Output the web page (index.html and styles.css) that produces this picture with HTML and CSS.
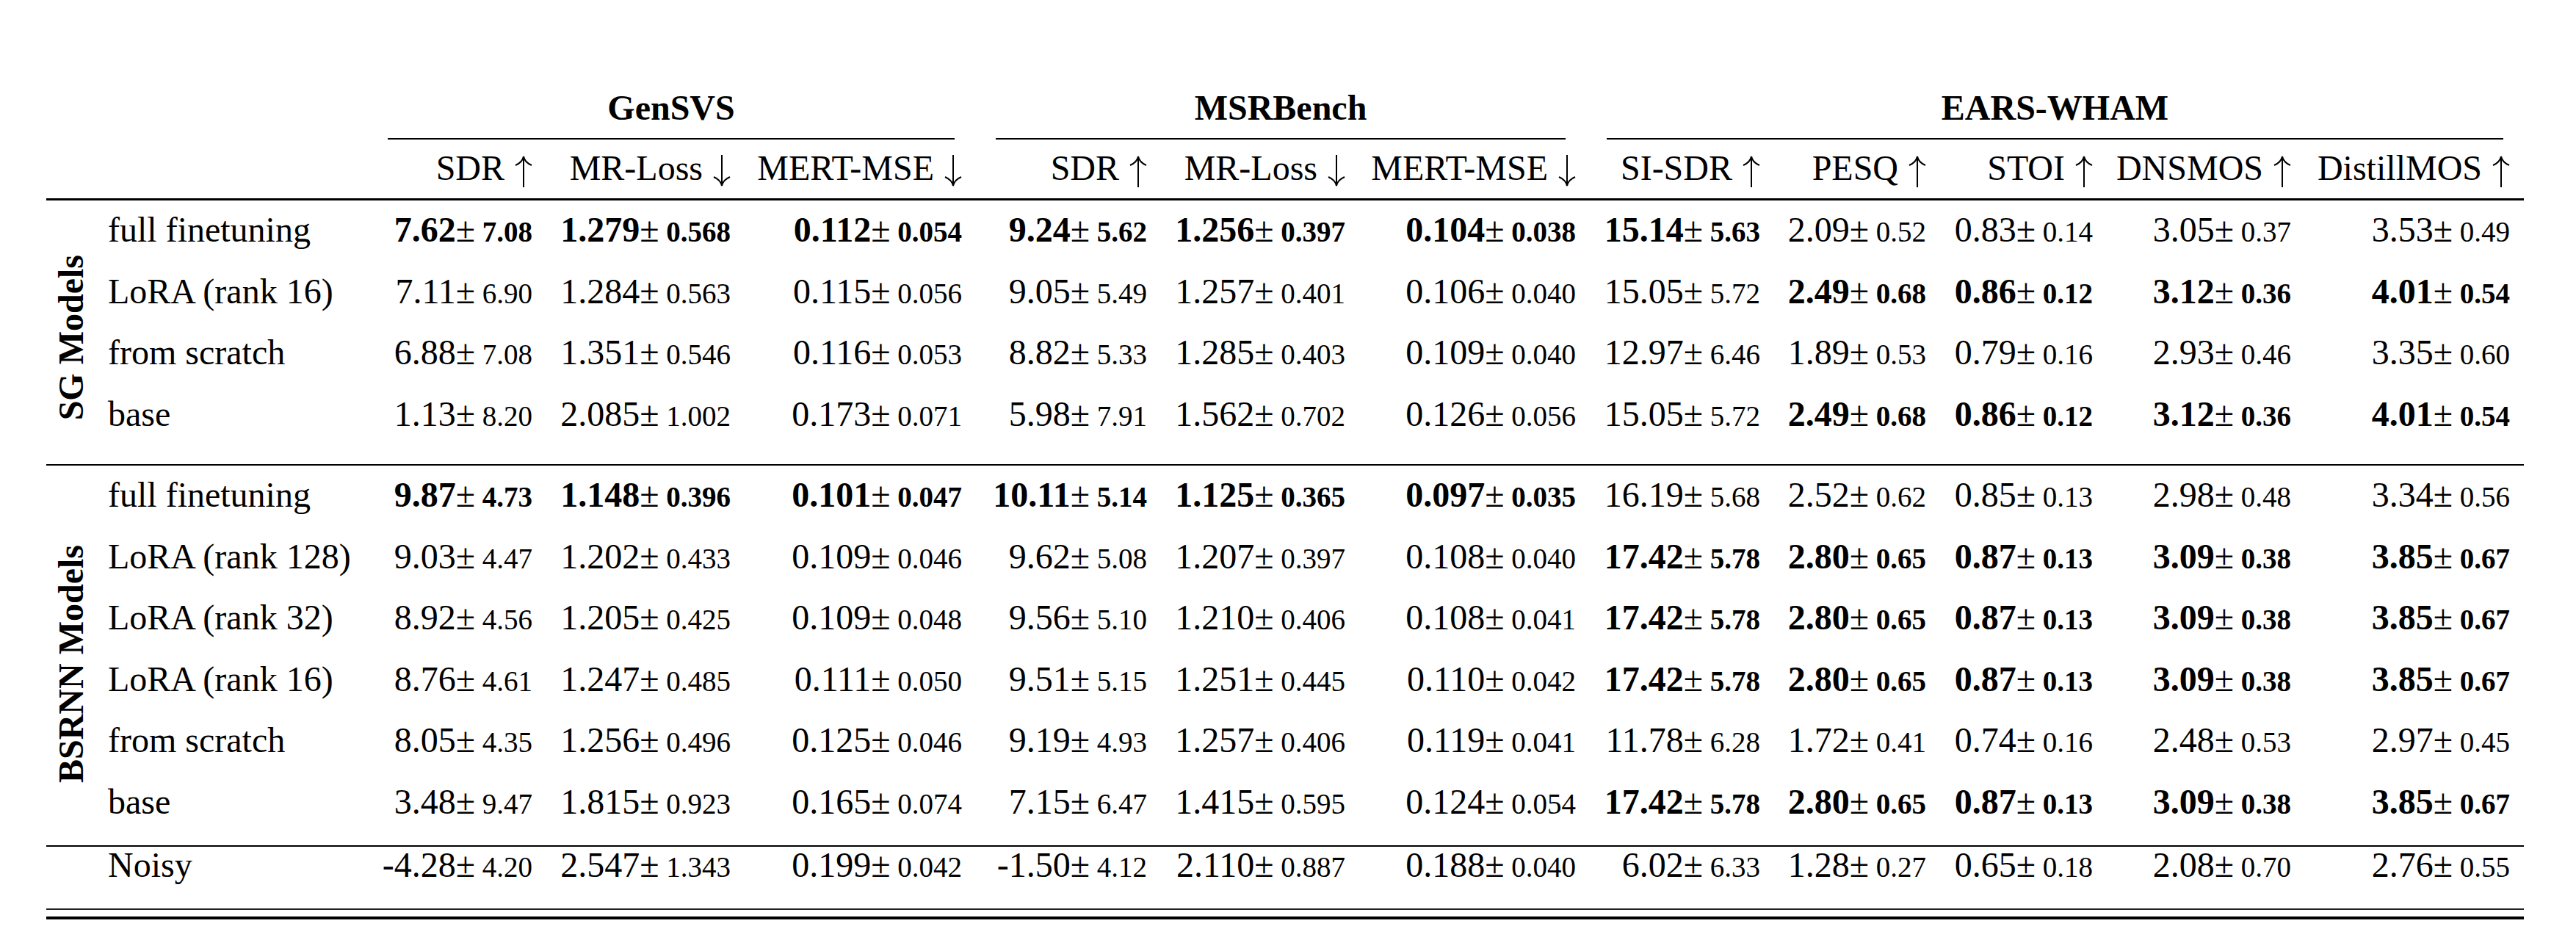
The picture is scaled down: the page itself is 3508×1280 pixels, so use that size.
FILE: index.html
```html
<!DOCTYPE html>
<html lang="en">
<head>
<meta charset="utf-8">
<title>Results table</title>
<link rel="stylesheet" href="styles.css">
</head>
<body>
<div class="tbl">
  <div class="grp-row">
    <div class="blank"></div>
    <div class="grp g1">GenSVS</div>
    <div class="grp g2">MSRBench</div>
    <div class="grp g3">EARS-WHAM</div>
  </div>
  <div class="hdr-row">
    <div class="blank"></div>
    <div class="h">SDR <svg class="ar" viewBox="0 0 28 44" aria-label="higher is better"><path d="M14 44V2M14 2Q12.5 10 3 14M14 2Q15.5 10 25 14"/></svg></div>
    <div class="h">MR-Loss <svg class="ar" viewBox="0 0 28 44" aria-label="lower is better"><path d="M14 0V42M14 42Q12.5 34 3 30M14 42Q15.5 34 25 30"/></svg></div>
    <div class="h">MERT-MSE <svg class="ar" viewBox="0 0 28 44" aria-label="lower is better"><path d="M14 0V42M14 42Q12.5 34 3 30M14 42Q15.5 34 25 30"/></svg></div>
    <div class="h">SDR <svg class="ar" viewBox="0 0 28 44" aria-label="higher is better"><path d="M14 44V2M14 2Q12.5 10 3 14M14 2Q15.5 10 25 14"/></svg></div>
    <div class="h">MR-Loss <svg class="ar" viewBox="0 0 28 44" aria-label="lower is better"><path d="M14 0V42M14 42Q12.5 34 3 30M14 42Q15.5 34 25 30"/></svg></div>
    <div class="h">MERT-MSE <svg class="ar" viewBox="0 0 28 44" aria-label="lower is better"><path d="M14 0V42M14 42Q12.5 34 3 30M14 42Q15.5 34 25 30"/></svg></div>
    <div class="h">SI-SDR <svg class="ar" viewBox="0 0 28 44" aria-label="higher is better"><path d="M14 44V2M14 2Q12.5 10 3 14M14 2Q15.5 10 25 14"/></svg></div>
    <div class="h">PESQ <svg class="ar" viewBox="0 0 28 44" aria-label="higher is better"><path d="M14 44V2M14 2Q12.5 10 3 14M14 2Q15.5 10 25 14"/></svg></div>
    <div class="h">STOI <svg class="ar" viewBox="0 0 28 44" aria-label="higher is better"><path d="M14 44V2M14 2Q12.5 10 3 14M14 2Q15.5 10 25 14"/></svg></div>
    <div class="h">DNSMOS <svg class="ar" viewBox="0 0 28 44" aria-label="higher is better"><path d="M14 44V2M14 2Q12.5 10 3 14M14 2Q15.5 10 25 14"/></svg></div>
    <div class="h">DistillMOS <svg class="ar" viewBox="0 0 28 44" aria-label="higher is better"><path d="M14 44V2M14 2Q12.5 10 3 14M14 2Q15.5 10 25 14"/></svg></div>
  </div>

  <section class="sec">
    <div class="side"><span class="vlabel">SG Models</span></div>
    <div class="rows">
      <div class="row">
        <div class="name">full finetuning</div>
        <div class="v"><b>7.62</b>±<b class="sd"> 7.08</b></div>
        <div class="v"><b>1.279</b>±<b class="sd"> 0.568</b></div>
        <div class="v"><b>0.112</b>±<b class="sd"> 0.054</b></div>
        <div class="v"><b>9.24</b>±<b class="sd"> 5.62</b></div>
        <div class="v"><b>1.256</b>±<b class="sd"> 0.397</b></div>
        <div class="v"><b>0.104</b>±<b class="sd"> 0.038</b></div>
        <div class="v"><b>15.14</b>±<b class="sd"> 5.63</b></div>
        <div class="v">2.09±<span class="sd"> 0.52</span></div>
        <div class="v">0.83±<span class="sd"> 0.14</span></div>
        <div class="v">3.05±<span class="sd"> 0.37</span></div>
        <div class="v">3.53±<span class="sd"> 0.49</span></div>
      </div>
      <div class="row">
        <div class="name">LoRA (rank 16)</div>
        <div class="v">7.11±<span class="sd"> 6.90</span></div>
        <div class="v">1.284±<span class="sd"> 0.563</span></div>
        <div class="v">0.115±<span class="sd"> 0.056</span></div>
        <div class="v">9.05±<span class="sd"> 5.49</span></div>
        <div class="v">1.257±<span class="sd"> 0.401</span></div>
        <div class="v">0.106±<span class="sd"> 0.040</span></div>
        <div class="v">15.05±<span class="sd"> 5.72</span></div>
        <div class="v"><b>2.49</b>±<b class="sd"> 0.68</b></div>
        <div class="v"><b>0.86</b>±<b class="sd"> 0.12</b></div>
        <div class="v"><b>3.12</b>±<b class="sd"> 0.36</b></div>
        <div class="v"><b>4.01</b>±<b class="sd"> 0.54</b></div>
      </div>
      <div class="row">
        <div class="name">from scratch</div>
        <div class="v">6.88±<span class="sd"> 7.08</span></div>
        <div class="v">1.351±<span class="sd"> 0.546</span></div>
        <div class="v">0.116±<span class="sd"> 0.053</span></div>
        <div class="v">8.82±<span class="sd"> 5.33</span></div>
        <div class="v">1.285±<span class="sd"> 0.403</span></div>
        <div class="v">0.109±<span class="sd"> 0.040</span></div>
        <div class="v">12.97±<span class="sd"> 6.46</span></div>
        <div class="v">1.89±<span class="sd"> 0.53</span></div>
        <div class="v">0.79±<span class="sd"> 0.16</span></div>
        <div class="v">2.93±<span class="sd"> 0.46</span></div>
        <div class="v">3.35±<span class="sd"> 0.60</span></div>
      </div>
      <div class="row">
        <div class="name">base</div>
        <div class="v">1.13±<span class="sd"> 8.20</span></div>
        <div class="v">2.085±<span class="sd"> 1.002</span></div>
        <div class="v">0.173±<span class="sd"> 0.071</span></div>
        <div class="v">5.98±<span class="sd"> 7.91</span></div>
        <div class="v">1.562±<span class="sd"> 0.702</span></div>
        <div class="v">0.126±<span class="sd"> 0.056</span></div>
        <div class="v">15.05±<span class="sd"> 5.72</span></div>
        <div class="v"><b>2.49</b>±<b class="sd"> 0.68</b></div>
        <div class="v"><b>0.86</b>±<b class="sd"> 0.12</b></div>
        <div class="v"><b>3.12</b>±<b class="sd"> 0.36</b></div>
        <div class="v"><b>4.01</b>±<b class="sd"> 0.54</b></div>
      </div>
    </div>
  </section>

  <section class="sec sec-b">
    <div class="side"><span class="vlabel">BSRNN Models</span></div>
    <div class="rows">
      <div class="row">
        <div class="name">full finetuning</div>
        <div class="v"><b>9.87</b>±<b class="sd"> 4.73</b></div>
        <div class="v"><b>1.148</b>±<b class="sd"> 0.396</b></div>
        <div class="v"><b>0.101</b>±<b class="sd"> 0.047</b></div>
        <div class="v"><b>10.11</b>±<b class="sd"> 5.14</b></div>
        <div class="v"><b>1.125</b>±<b class="sd"> 0.365</b></div>
        <div class="v"><b>0.097</b>±<b class="sd"> 0.035</b></div>
        <div class="v">16.19±<span class="sd"> 5.68</span></div>
        <div class="v">2.52±<span class="sd"> 0.62</span></div>
        <div class="v">0.85±<span class="sd"> 0.13</span></div>
        <div class="v">2.98±<span class="sd"> 0.48</span></div>
        <div class="v">3.34±<span class="sd"> 0.56</span></div>
      </div>
      <div class="row">
        <div class="name">LoRA (rank 128)</div>
        <div class="v">9.03±<span class="sd"> 4.47</span></div>
        <div class="v">1.202±<span class="sd"> 0.433</span></div>
        <div class="v">0.109±<span class="sd"> 0.046</span></div>
        <div class="v">9.62±<span class="sd"> 5.08</span></div>
        <div class="v">1.207±<span class="sd"> 0.397</span></div>
        <div class="v">0.108±<span class="sd"> 0.040</span></div>
        <div class="v"><b>17.42</b>±<b class="sd"> 5.78</b></div>
        <div class="v"><b>2.80</b>±<b class="sd"> 0.65</b></div>
        <div class="v"><b>0.87</b>±<b class="sd"> 0.13</b></div>
        <div class="v"><b>3.09</b>±<b class="sd"> 0.38</b></div>
        <div class="v"><b>3.85</b>±<b class="sd"> 0.67</b></div>
      </div>
      <div class="row">
        <div class="name">LoRA (rank 32)</div>
        <div class="v">8.92±<span class="sd"> 4.56</span></div>
        <div class="v">1.205±<span class="sd"> 0.425</span></div>
        <div class="v">0.109±<span class="sd"> 0.048</span></div>
        <div class="v">9.56±<span class="sd"> 5.10</span></div>
        <div class="v">1.210±<span class="sd"> 0.406</span></div>
        <div class="v">0.108±<span class="sd"> 0.041</span></div>
        <div class="v"><b>17.42</b>±<b class="sd"> 5.78</b></div>
        <div class="v"><b>2.80</b>±<b class="sd"> 0.65</b></div>
        <div class="v"><b>0.87</b>±<b class="sd"> 0.13</b></div>
        <div class="v"><b>3.09</b>±<b class="sd"> 0.38</b></div>
        <div class="v"><b>3.85</b>±<b class="sd"> 0.67</b></div>
      </div>
      <div class="row">
        <div class="name">LoRA (rank 16)</div>
        <div class="v">8.76±<span class="sd"> 4.61</span></div>
        <div class="v">1.247±<span class="sd"> 0.485</span></div>
        <div class="v">0.111±<span class="sd"> 0.050</span></div>
        <div class="v">9.51±<span class="sd"> 5.15</span></div>
        <div class="v">1.251±<span class="sd"> 0.445</span></div>
        <div class="v">0.110±<span class="sd"> 0.042</span></div>
        <div class="v"><b>17.42</b>±<b class="sd"> 5.78</b></div>
        <div class="v"><b>2.80</b>±<b class="sd"> 0.65</b></div>
        <div class="v"><b>0.87</b>±<b class="sd"> 0.13</b></div>
        <div class="v"><b>3.09</b>±<b class="sd"> 0.38</b></div>
        <div class="v"><b>3.85</b>±<b class="sd"> 0.67</b></div>
      </div>
      <div class="row">
        <div class="name">from scratch</div>
        <div class="v">8.05±<span class="sd"> 4.35</span></div>
        <div class="v">1.256±<span class="sd"> 0.496</span></div>
        <div class="v">0.125±<span class="sd"> 0.046</span></div>
        <div class="v">9.19±<span class="sd"> 4.93</span></div>
        <div class="v">1.257±<span class="sd"> 0.406</span></div>
        <div class="v">0.119±<span class="sd"> 0.041</span></div>
        <div class="v">11.78±<span class="sd"> 6.28</span></div>
        <div class="v">1.72±<span class="sd"> 0.41</span></div>
        <div class="v">0.74±<span class="sd"> 0.16</span></div>
        <div class="v">2.48±<span class="sd"> 0.53</span></div>
        <div class="v">2.97±<span class="sd"> 0.45</span></div>
      </div>
      <div class="row">
        <div class="name">base</div>
        <div class="v">3.48±<span class="sd"> 9.47</span></div>
        <div class="v">1.815±<span class="sd"> 0.923</span></div>
        <div class="v">0.165±<span class="sd"> 0.074</span></div>
        <div class="v">7.15±<span class="sd"> 6.47</span></div>
        <div class="v">1.415±<span class="sd"> 0.595</span></div>
        <div class="v">0.124±<span class="sd"> 0.054</span></div>
        <div class="v"><b>17.42</b>±<b class="sd"> 5.78</b></div>
        <div class="v"><b>2.80</b>±<b class="sd"> 0.65</b></div>
        <div class="v"><b>0.87</b>±<b class="sd"> 0.13</b></div>
        <div class="v"><b>3.09</b>±<b class="sd"> 0.38</b></div>
        <div class="v"><b>3.85</b>±<b class="sd"> 0.67</b></div>
      </div>
    </div>
  </section>

  <section class="sec sec-n">
    <div class="side"></div>
    <div class="rows">
      <div class="row">
        <div class="name">Noisy</div>
        <div class="v">-4.28±<span class="sd"> 4.20</span></div>
        <div class="v">2.547±<span class="sd"> 1.343</span></div>
        <div class="v">0.199±<span class="sd"> 0.042</span></div>
        <div class="v">-1.50±<span class="sd"> 4.12</span></div>
        <div class="v">2.110±<span class="sd"> 0.887</span></div>
        <div class="v">0.188±<span class="sd"> 0.040</span></div>
        <div class="v">6.02±<span class="sd"> 6.33</span></div>
        <div class="v">1.28±<span class="sd"> 0.27</span></div>
        <div class="v">0.65±<span class="sd"> 0.18</span></div>
        <div class="v">2.08±<span class="sd"> 0.70</span></div>
        <div class="v">2.76±<span class="sd"> 0.55</span></div>
      </div>
    </div>
  </section>
  <div class="bottom-rule"></div>
</div>
</body>
</html>
```

FILE: styles.css
```css
html, body {
  margin: 0;
  padding: 0;
  background: #ffffff;
}

body {
  color: #000000;
  font-family: "Liberation Serif", "Times New Roman", Times, serif;
  font-size: 48px;
}

.tbl {
  width: 3374px;
  margin-left: 63px;
  padding-top: 105px;
}

/* group header row with trimmed cmidrules */
.grp-row {
  display: grid;
  grid-template-columns: 452px 814px 836px 1272px;
  line-height: 83px;
}

.grp {
  font-weight: bold;
  text-align: center;
  border-bottom: 2px solid #000;
}

.g1 { margin: 0 29px 0 13px; }
.g2 { margin: 0 33px 0 27px; }
.g3 { margin: 0 28px 0 23px; }

/* column header row */
.hdr-row {
  display: grid;
  grid-template-columns: 452px 229px 270px 315px 252px 270px 314px 251px 226px 227px 270px 298px;
  line-height: 78px;
  padding-bottom: 2px;
  border-bottom: 3px solid #000;
}

.h {
  text-align: right;
  padding-right: 17px;
  white-space: nowrap;
}

.ar {
  width: 28px;
  height: 44px;
  vertical-align: -10px;
  fill: none;
  stroke: #000;
  stroke-width: 2;
}

/* body sections */
.sec {
  display: flex;
  border-bottom: 2px solid #000;
  padding-bottom: 25px;
}

.sec-b {
  padding-bottom: 16px;
}

.sec-n {
  border-bottom: 2px solid #222;
  padding-bottom: 34px;
}

.side {
  width: 67px;
  flex: none;
  box-sizing: border-box;
  padding: 40px 0 0 10px;
  display: flex;
  align-items: center;
}

.vlabel {
  writing-mode: vertical-rl;
  transform: rotate(180deg);
  font-weight: bold;
  line-height: 48px;
  white-space: nowrap;
}

.rows {
  flex: 1;
}

.row {
  display: grid;
  grid-template-columns: 385px 229px 270px 315px 252px 270px 314px 251px 226px 227px 270px 298px;
  line-height: 79.5px;
  padding-bottom: 4px;
}

.sec-n .row {
  line-height: 50px;
  padding-bottom: 0;
}

.name {
  padding-left: 17px;
  white-space: nowrap;
}

.v {
  text-align: right;
  padding-right: 19px;
  white-space: nowrap;
}

.sd {
  font-size: 39px;
  line-height: 1;
}

.bottom-rule {
  margin-top: 9px;
  height: 4px;
  background: #000;
}
```
